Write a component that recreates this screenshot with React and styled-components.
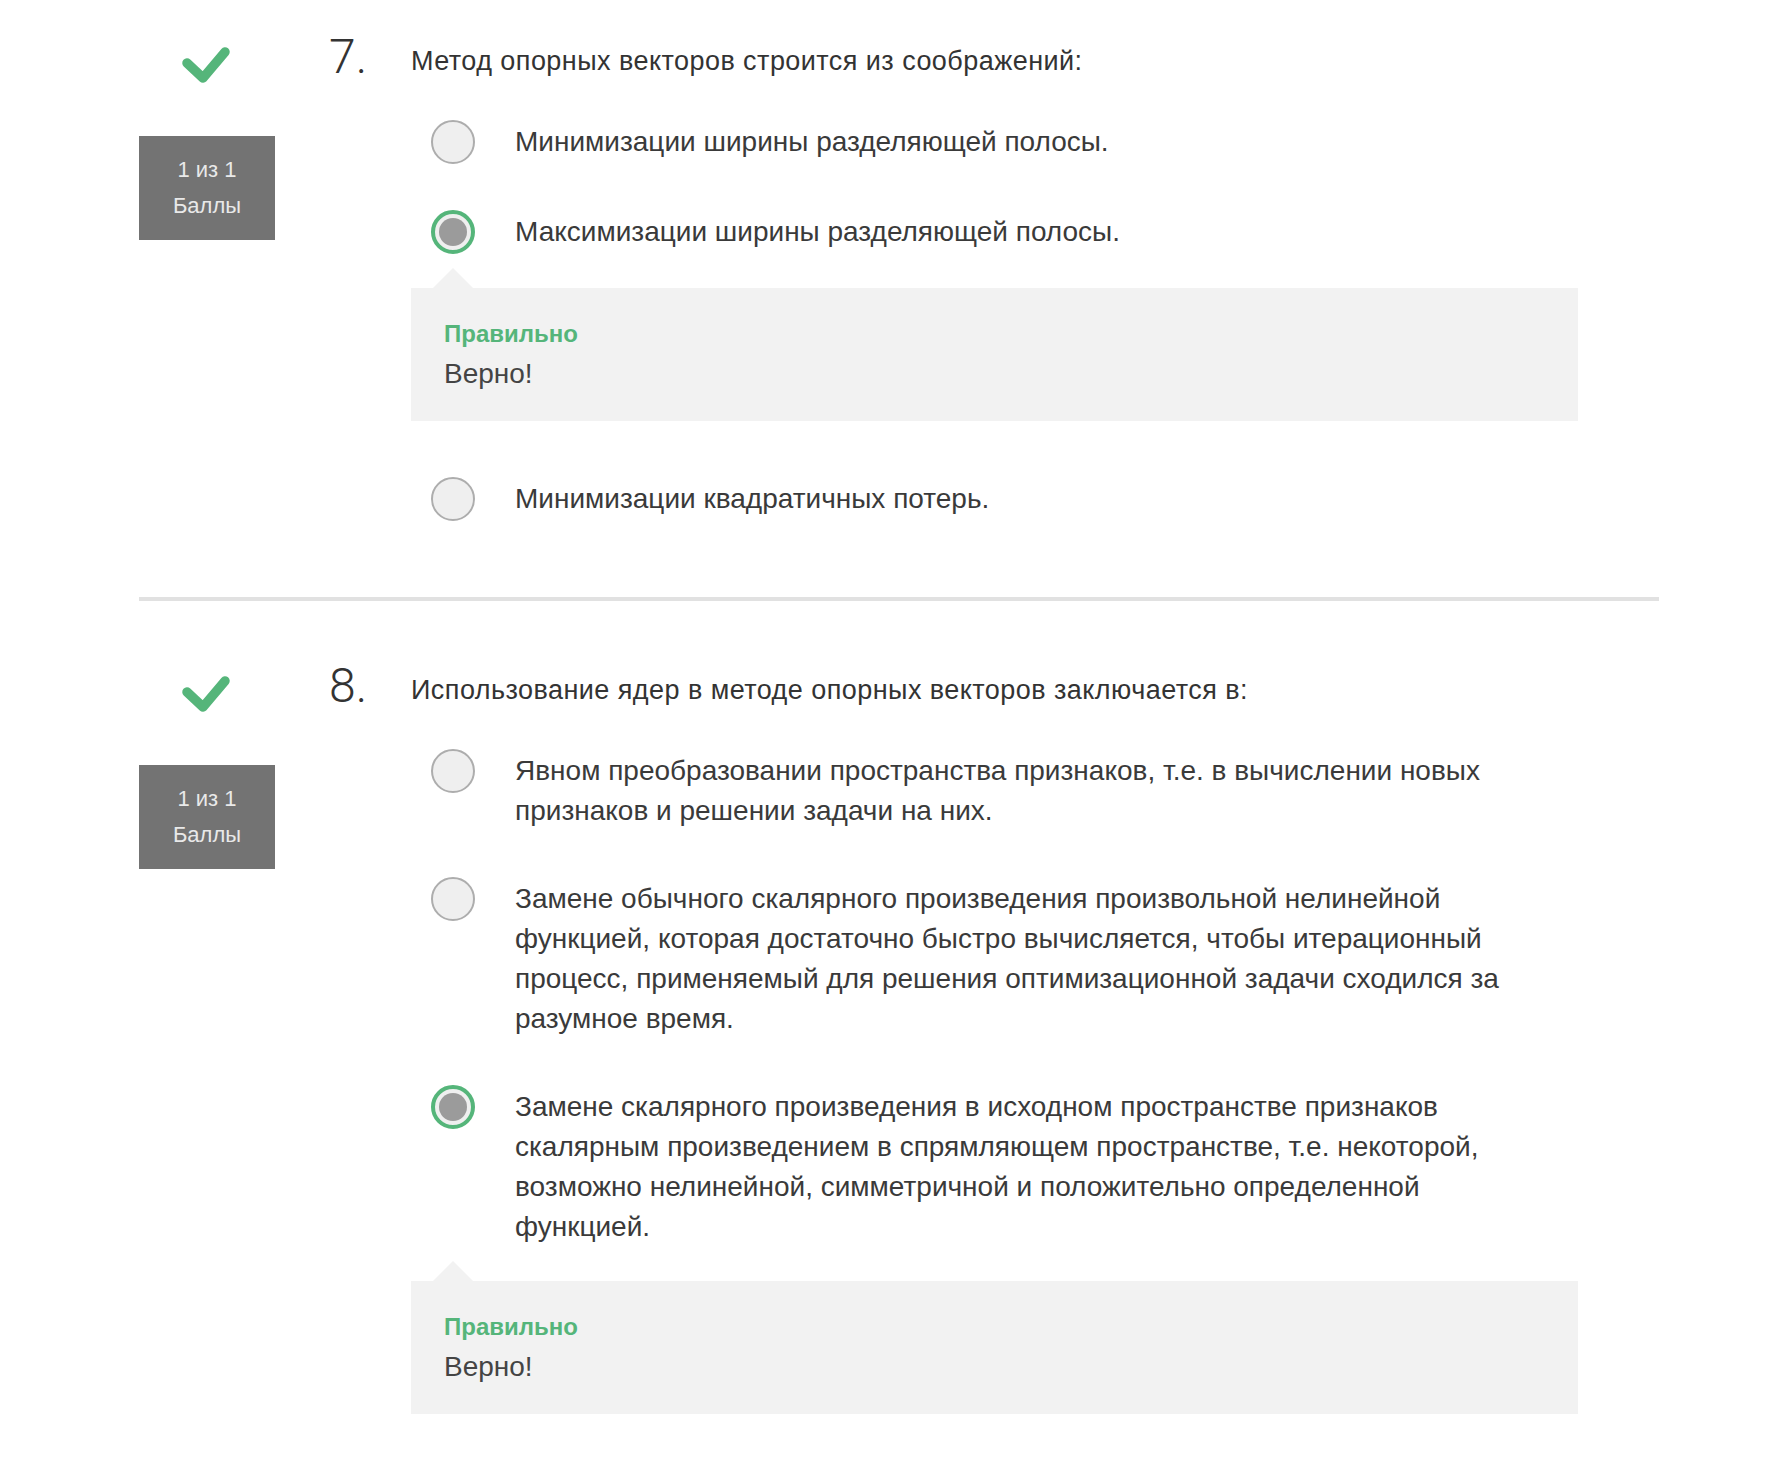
import React from "react";
import styled, { createGlobalStyle } from "styled-components";

const GlobalStyle = createGlobalStyle`
  html, body { margin: 0; padding: 0; background: #ffffff; }
  body {
    font-family: "Liberation Sans", Arial, Helvetica, sans-serif;
    color: #333333;
    -webkit-font-smoothing: antialiased;
  }
`;

const Page = styled.main`
  width: 1520px;
  margin-left: 139px;
`;

const Section = styled.section`
  display: grid;
  grid-template-columns: 190px 82px 1167px;
  align-items: start;
  padding: 33px 0 76px;

  & + & {
    border-top: 4px solid #e1e1e1;
    padding-top: 61px;
    padding-bottom: 50px;
  }
`;

const LeftCol = styled.div`
  width: 136px;
  display: flex;
  flex-direction: column;
  align-items: center;
`;

const CheckIcon = styled.svg`
  display: block;
  margin-top: 11px;
  width: 54px;
  height: 44px;
`;

const ScoreBox = styled.div`
  margin-top: 48px;
  width: 136px;
  box-sizing: border-box;
  padding: 16px 0;
  background: #737373;
  color: #e9e9e9;
  font-size: 22px;
  line-height: 36px;
  text-align: center;
`;

const Number = styled.div`
  font-family: Roboto, "Open Sans", sans-serif;
  font-weight: 300;
  font-size: 48px;
  line-height: 48px;
  color: #333333;
`;

const Content = styled.div`
  display: flex;
  flex-direction: column;
`;

const QuestionText = styled.div`
  margin-top: 8px;
  font-size: 27px;
  letter-spacing: 0.45px;
  line-height: 40px;
  color: #333333;
`;

const Options = styled.div`
  margin-top: 39px;
  padding-left: 20px;
  display: flex;
  flex-direction: column;
  gap: 46px;
`;

const OptionBlock = styled.div`
  display: flex;
  flex-direction: column;
`;

const OptionRow = styled.label`
  display: flex;
  align-items: flex-start;
  gap: 40px;
`;

const Radio = styled.span`
  flex: none;
  box-sizing: border-box;
  width: 44px;
  height: 44px;
  border-radius: 50%;
  display: flex;
  align-items: center;
  justify-content: center;
  background: #efefef;
  border: ${(p) => (p.$checked ? "4px solid #55b57a" : "2px solid #adadad")};

  &::after {
    content: "";
    display: ${(p) => (p.$checked ? "block" : "none")};
    width: 28px;
    height: 28px;
    border-radius: 50%;
    background: #9b9b9b;
  }
`;

const OptionText = styled.div`
  padding-top: 2px;
  font-size: 28px;
  line-height: 40px;
  color: #3a3a3a;
  white-space: nowrap;
`;

const Feedback = styled.div`
  position: relative;
  margin: 34px 0 10px -20px;
  box-sizing: border-box;
  padding: 30px 33px 27px;
  background: #f2f2f2;

  &::before {
    content: "";
    position: absolute;
    top: -20px;
    left: 22px;
    width: 0;
    height: 0;
    border-left: 20px solid transparent;
    border-right: 20px solid transparent;
    border-bottom: 20px solid #f2f2f2;
  }
`;

const FeedbackLabel = styled.div`
  font-size: 24px;
  line-height: 32px;
  font-weight: 700;
  color: #55b57a;
  margin-bottom: 4px;
`;

const FeedbackText = styled.div`
  font-size: 28px;
  line-height: 40px;
  color: #444444;
`;

const Check = () => (
  <CheckIcon viewBox="0 0 54 44" aria-hidden="true">
    <polyline
      points="7,19 23,34 45,8"
      fill="none"
      stroke="#55b57a"
      strokeWidth="9.5"
      strokeLinecap="round"
      strokeLinejoin="round"
    />
  </CheckIcon>
);

const questions = [
  {
    n: "7.",
    text: "Метод опорных векторов строится из соображений:",
    options: [
      { lines: ["Минимизации ширины разделяющей полосы."] },
      { lines: ["Максимизации ширины разделяющей полосы."], checked: true },
      { lines: ["Минимизации квадратичных потерь."] },
    ],
  },
  {
    n: "8.",
    text: "Использование ядер в методе опорных векторов заключается в:",
    options: [
      {
        lines: [
          "Явном преобразовании пространства признаков, т.е. в вычислении новых",
          "признаков и решении задачи на них.",
        ],
      },
      {
        lines: [
          "Замене обычного скалярного произведения произвольной нелинейной",
          "функцией, которая достаточно быстро вычисляется, чтобы итерационный",
          "процесс, применяемый для решения оптимизационной задачи сходился за",
          "разумное время.",
        ],
      },
      {
        lines: [
          "Замене скалярного произведения в исходном пространстве признаков",
          "скалярным произведением в спрямляющем пространстве, т.е. некоторой,",
          "возможно нелинейной, симметричной и положительно определенной",
          "функцией.",
        ],
        checked: true,
      },
    ],
  },
];

export default function App() {
  return (
    <>
      <GlobalStyle />
      <Page>
        {questions.map((q) => (
          <Section key={q.n}>
            <LeftCol>
              <Check />
              <ScoreBox>
                1 из 1
                <br />
                Баллы
              </ScoreBox>
            </LeftCol>
            <Number>{q.n}</Number>
            <Content>
              <QuestionText>{q.text}</QuestionText>
              <Options>
                {q.options.map((o, i) => (
                  <OptionBlock key={i}>
                    <OptionRow>
                      <Radio $checked={o.checked} />
                      <OptionText>
                        {o.lines.map((l, j) => (
                          <React.Fragment key={j}>
                            {j > 0 && <br />}
                            {l}
                          </React.Fragment>
                        ))}
                      </OptionText>
                    </OptionRow>
                    {o.checked && (
                      <Feedback>
                        <FeedbackLabel>Правильно</FeedbackLabel>
                        <FeedbackText>Верно!</FeedbackText>
                      </Feedback>
                    )}
                  </OptionBlock>
                ))}
              </Options>
            </Content>
          </Section>
        ))}
      </Page>
    </>
  );
}
